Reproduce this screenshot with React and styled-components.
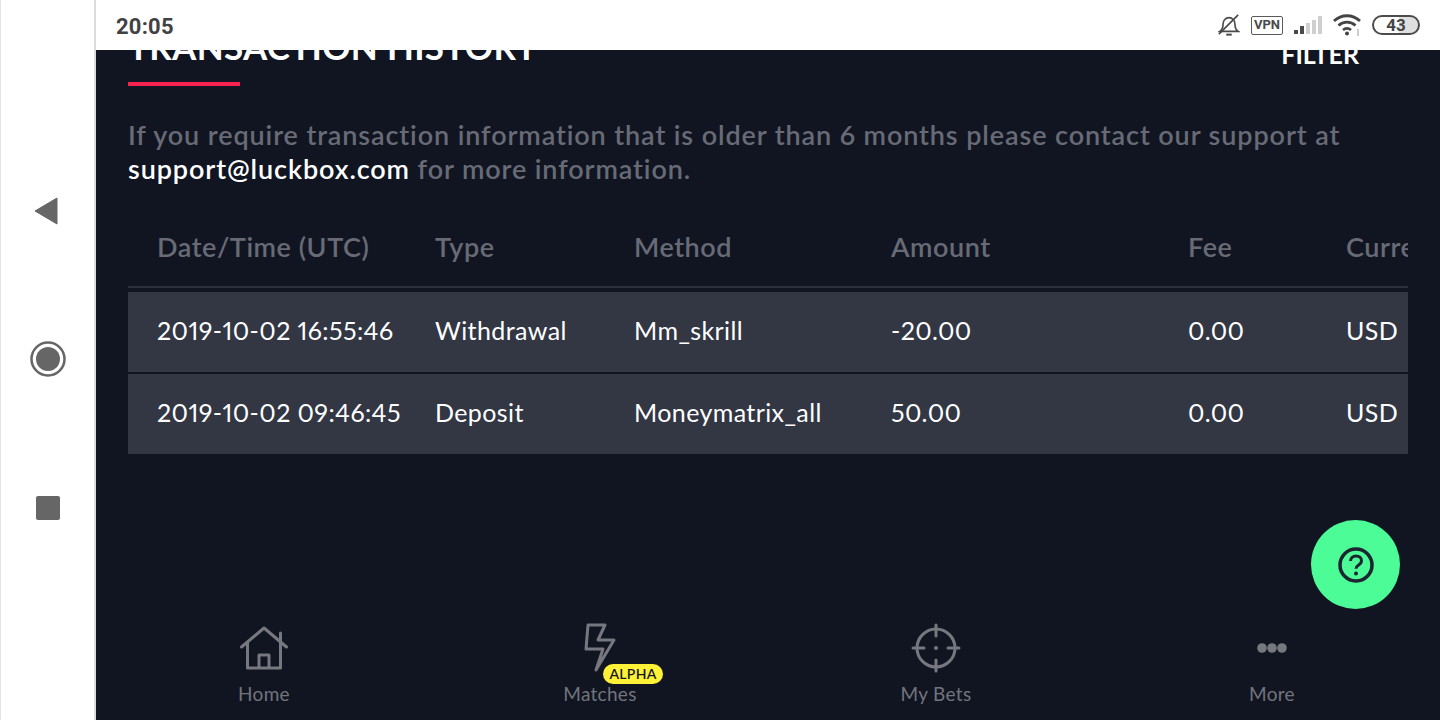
import React from 'react';
import styled, { createGlobalStyle } from 'styled-components';

const GlobalStyle = createGlobalStyle`
  html, body {
    margin: 0;
    padding: 0;
    width: 1440px;
    height: 720px;
    overflow: hidden;
    background: #fff;
    font-family: Lato, "Open Sans", sans-serif;
    font-variant-numeric: proportional-nums;
  }
`;

const Screen = styled.div`
  display: flex;
  width: 1440px;
  height: 720px;
`;

const NavRail = styled.div`
  width: 96px;
  height: 720px;
  flex: none;
  box-sizing: border-box;
  padding-top: 188px;
  background: #fff;
  border-left: 1px solid #e4e4e4;
  border-right: 2px solid #dcdcdc;
  display: flex;
  flex-direction: column;
  align-items: center;
  gap: 105px;
`;

const NavIcon = styled.svg`
  display: block;
  width: 44px;
  height: 44px;
  margin-left: 1px;
`;

const Main = styled.div`
  flex: 1;
  display: flex;
  flex-direction: column;
  min-width: 0;
`;

const StatusBar = styled.div`
  height: 50px;
  flex: none;
  background: #fff;
  display: flex;
  align-items: center;
  justify-content: space-between;
  padding: 0 20px;
`;

const Clock = styled.span`
  font-family: Roboto, sans-serif;
  font-weight: 700;
  font-size: 22px;
  color: #424242;
  margin-top: 2px;
`;

const StatusIcons = styled.div`
  display: flex;
  align-items: center;
  gap: 11px;
`;

const VpnTag = styled.span`
  font-family: Roboto, sans-serif;
  font-weight: 700;
  font-size: 13px;
  line-height: 16px;
  height: 19px;
  width: 32px;
  box-sizing: border-box;
  border: 1.5px solid #5a5a5a;
  border-radius: 2px;
  color: #4a4a4a;
  text-align: center;
`;

const Battery = styled.span`
  display: block;
  width: 48px;
  height: 20px;
  box-sizing: border-box;
  border: 2px solid #4c4c4c;
  border-radius: 10px;
  overflow: hidden;
  font-family: Roboto, sans-serif;
  font-weight: 700;
  font-size: 17px;
  line-height: 16px;
  text-align: center;
  color: #444;
  background: linear-gradient(to left, #dfdfdf 0 43%, #fff 43%);
`;

const Body = styled.div`
  flex: 1;
  position: relative;
  background: #111522;
  overflow: hidden;
  display: flex;
  flex-direction: column;
`;

const Scroller = styled.div`
  flex: 1;
  padding: 0 32px;
  margin-top: -22px;
`;

const TitleRow = styled.div`
  display: flex;
  justify-content: space-between;
  align-items: flex-start;
`;

const Title = styled.h2`
  margin: 0;
  font-weight: 700;
  font-size: 35px;
  line-height: 36px;
  letter-spacing: 0.3px;
  color: #fff;
  text-transform: uppercase;
`;

const FilterLabel = styled.span`
  font-weight: 700;
  font-size: 25px;
  line-height: 30px;
  color: #fff;
  margin: 11px 49px 0 0;
`;

const Underline = styled.div`
  width: 112px;
  height: 4px;
  margin-top: 13px;
  background: #f6214f;
`;

const Notice = styled.p`
  margin: 32px 0 0;
  font-weight: 600;
  font-size: 27px;
  line-height: 34px;
  letter-spacing: 0.9px;
  color: #686b75;
`;

const Email = styled.span`
  color: #fff;
`;

const Table = styled.div`
  width: 1280px;
  margin-top: 22px;
  overflow: hidden;
`;

const TableHead = styled.div`
  display: grid;
  grid-template-columns: 278px 199px 257px 297px 158px 62px;
  padding: 0 0 2px 29px;
  box-sizing: border-box;
  height: 80px;
  align-items: center;
  border-bottom: 2px solid #2d303d;
  margin-bottom: 4px;
`;

const HeadCell = styled.span`
  font-weight: 600;
  font-size: 27px;
  letter-spacing: 0.55px;
  color: #686b75;
  white-space: nowrap;
  overflow: hidden;
`;

const Row = styled.div`
  display: grid;
  grid-template-columns: 278px 199px 257px 297px 158px 62px;
  padding: 0 0 4px 29px;
  box-sizing: border-box;
  height: 80px;
  align-items: center;
  background: #333643;
  margin-bottom: 2px;
`;

const Cell = styled.span`
  font-size: 25px;
  letter-spacing: 0.4px;
  color: #fff;
  white-space: nowrap;
`;

const HelpButton = styled.button`
  position: absolute;
  right: 40px;
  bottom: 111px;
  width: 89px;
  height: 89px;
  padding: 0;
  border: none;
  border-radius: 50%;
  background: #4cfc96;
  display: flex;
  align-items: center;
  justify-content: center;
`;

const TabBar = styled.div`
  height: 110px;
  flex: none;
  display: grid;
  grid-template-columns: repeat(4, 336px);
`;

const Tab = styled.div`
  position: relative;
  padding-top: 12px;
  display: flex;
  flex-direction: column;
  align-items: center;
`;

const TabIcon = styled.svg`
  display: block;
  width: 52px;
  height: 52px;
`;

const TabLabel = styled.span`
  margin-top: 8px;
  font-size: 19px;
  line-height: 24px;
  letter-spacing: 0.3px;
  color: #72747c;
`;

const AlphaBadge = styled.span`
  position: absolute;
  left: 171px;
  top: 54px;
  width: 60px;
  height: 20px;
  border-radius: 10px;
  background: #fff135;
  color: #15171f;
  font-size: 14px;
  font-weight: 600;
  letter-spacing: 0.3px;
  line-height: 20px;
  text-align: center;
`;

const columns = ['Date/Time (UTC)', 'Type', 'Method', 'Amount', 'Fee', 'Currency'];

const rows = [
  ['2019-10-02 16:55:46', 'Withdrawal', 'Mm_skrill', '-20.00', '0.00', 'USD'],
  ['2019-10-02 09:46:45', 'Deposit', 'Moneymatrix_all', '50.00', '0.00', 'USD'],
];

const tabStroke = {
  fill: 'none',
  stroke: '#77787f',
  strokeWidth: 3,
  strokeLinejoin: 'round',
  strokeLinecap: 'round',
};

function MutedBell() {
  return (
    <svg width="22" height="24" viewBox="0 0 24 26" fill="none" stroke="#4a4a4a" strokeWidth="1.8">
      <path d="M2 20c2.500-1.500 3.500-3.500 3.500-8 0-4 2.800-7 6.500-7s6.500 3 6.500 7c0 4.500 1 6.500 3.500 8z" />
      <path d="M9 23.500h6" strokeWidth="2.200" />
      <path d="M1 23 22 2" />
    </svg>
  );
}

function SignalBars() {
  return (
    <svg width="28" height="20" viewBox="0 0 28 20">
      <rect x="0" y="15" width="4" height="4" fill="#4a4a4a" />
      <rect x="6" y="11" width="4" height="8" fill="#4a4a4a" />
      <rect x="12" y="8" width="4" height="11" fill="#cfcfcf" />
      <rect x="18" y="5" width="4" height="14" fill="#cfcfcf" />
      <rect x="24" y="1" width="4" height="18" fill="#cfcfcf" />
    </svg>
  );
}

function Wifi() {
  return (
    <svg width="28" height="24" viewBox="0 0 28 24" fill="none" stroke="#444" strokeWidth="2.800">
      <path d="M1 8c7.500-7 18.500-7 26 0" />
      <path d="M5.500 12.500c5-4.500 12-4.500 17 0" />
      <path d="M10 17c2.500-2 5.500-2 8 0" />
      <circle cx="14" cy="20.500" r="2" fill="#444" stroke="none" />
      <path d="M25 16v7" stroke="#bbb" strokeWidth="1.500" />
    </svg>
  );
}

export default function App() {
  return (
    <Screen>
      <GlobalStyle />
      <NavRail>
        <NavIcon viewBox="0 0 44 44">
          <path d="M9 23 31 10v26z" fill="#666" stroke="#666" strokeLinejoin="round" />
        </NavIcon>
        <NavIcon viewBox="0 0 44 44">
          <circle cx="22" cy="22" r="16.500" fill="none" stroke="#666" strokeWidth="2.500" />
          <circle cx="22" cy="22" r="12" fill="#666" />
        </NavIcon>
        <NavIcon viewBox="0 0 44 44">
          <rect x="10" y="10" width="24" height="24" rx="2" fill="#666" />
        </NavIcon>
      </NavRail>
      <Main>
        <StatusBar>
          <Clock>20:05</Clock>
          <StatusIcons>
            <MutedBell />
            <VpnTag>VPN</VpnTag>
            <SignalBars />
            <Wifi />
            <Battery>43</Battery>
          </StatusIcons>
        </StatusBar>
        <Body>
          <Scroller>
            <TitleRow>
              <Title>Transaction History</Title>
              <FilterLabel>FILTER</FilterLabel>
            </TitleRow>
            <Underline />
            <Notice>
              If you require transaction information that is older than 6 months please contact our support at{' '}
              <Email>support@luckbox.com</Email> for more information.
            </Notice>
            <Table>
              <TableHead>
                {columns.map((c) => (
                  <HeadCell key={c}>{c}</HeadCell>
                ))}
              </TableHead>
              {rows.map((row) => (
                <Row key={row[0]}>
                  {row.map((value) => (
                    <Cell key={value}>{value}</Cell>
                  ))}
                </Row>
              ))}
            </Table>
          </Scroller>
          <HelpButton aria-label="Help">
            <svg width="40" height="40" viewBox="0 0 40 40" fill="none" stroke="#1c2530" strokeWidth="3.500">
              <circle cx="20" cy="20" r="16" />
              <path d="M14.500 16c0-3.200 2.500-5 5.500-5s5.500 1.800 5.500 4.800c0 4.500-5.500 4-5.500 8" strokeWidth="3" />
              <circle cx="20" cy="28.500" r="2" fill="#1c2530" stroke="none" />
            </svg>
          </HelpButton>
          <TabBar>
            <Tab>
              <TabIcon viewBox="0 0 52 52">
                <path {...tabStroke} d="M3.500 25 26 6l22.500 19M9.500 20v26h33V11M21 46V33h10v13" />
              </TabIcon>
              <TabLabel>Home</TabLabel>
            </Tab>
            <Tab>
              <TabIcon viewBox="0 0 52 52">
                <path {...tabStroke} d="M14 3h17l-7 15h16L22 48l7-21H12z" />
              </TabIcon>
              <TabLabel>Matches</TabLabel>
              <AlphaBadge>ALPHA</AlphaBadge>
            </Tab>
            <Tab>
              <TabIcon viewBox="0 0 52 52">
                <circle {...tabStroke} cx="26" cy="26" r="19" />
                <path {...tabStroke} d="M26 3v11M26 38v11M3 26h11M38 26h11" />
                <circle cx="26" cy="26" r="2" fill="#77787f" />
              </TabIcon>
              <TabLabel>My Bets</TabLabel>
            </Tab>
            <Tab>
              <TabIcon viewBox="0 0 52 52">
                <circle cx="16" cy="26" r="4.800" fill="#77787f" />
                <circle cx="26" cy="26" r="4.800" fill="#77787f" />
                <circle cx="36" cy="26" r="4.800" fill="#77787f" />
              </TabIcon>
              <TabLabel>More</TabLabel>
            </Tab>
          </TabBar>
        </Body>
      </Main>
    </Screen>
  );
}
